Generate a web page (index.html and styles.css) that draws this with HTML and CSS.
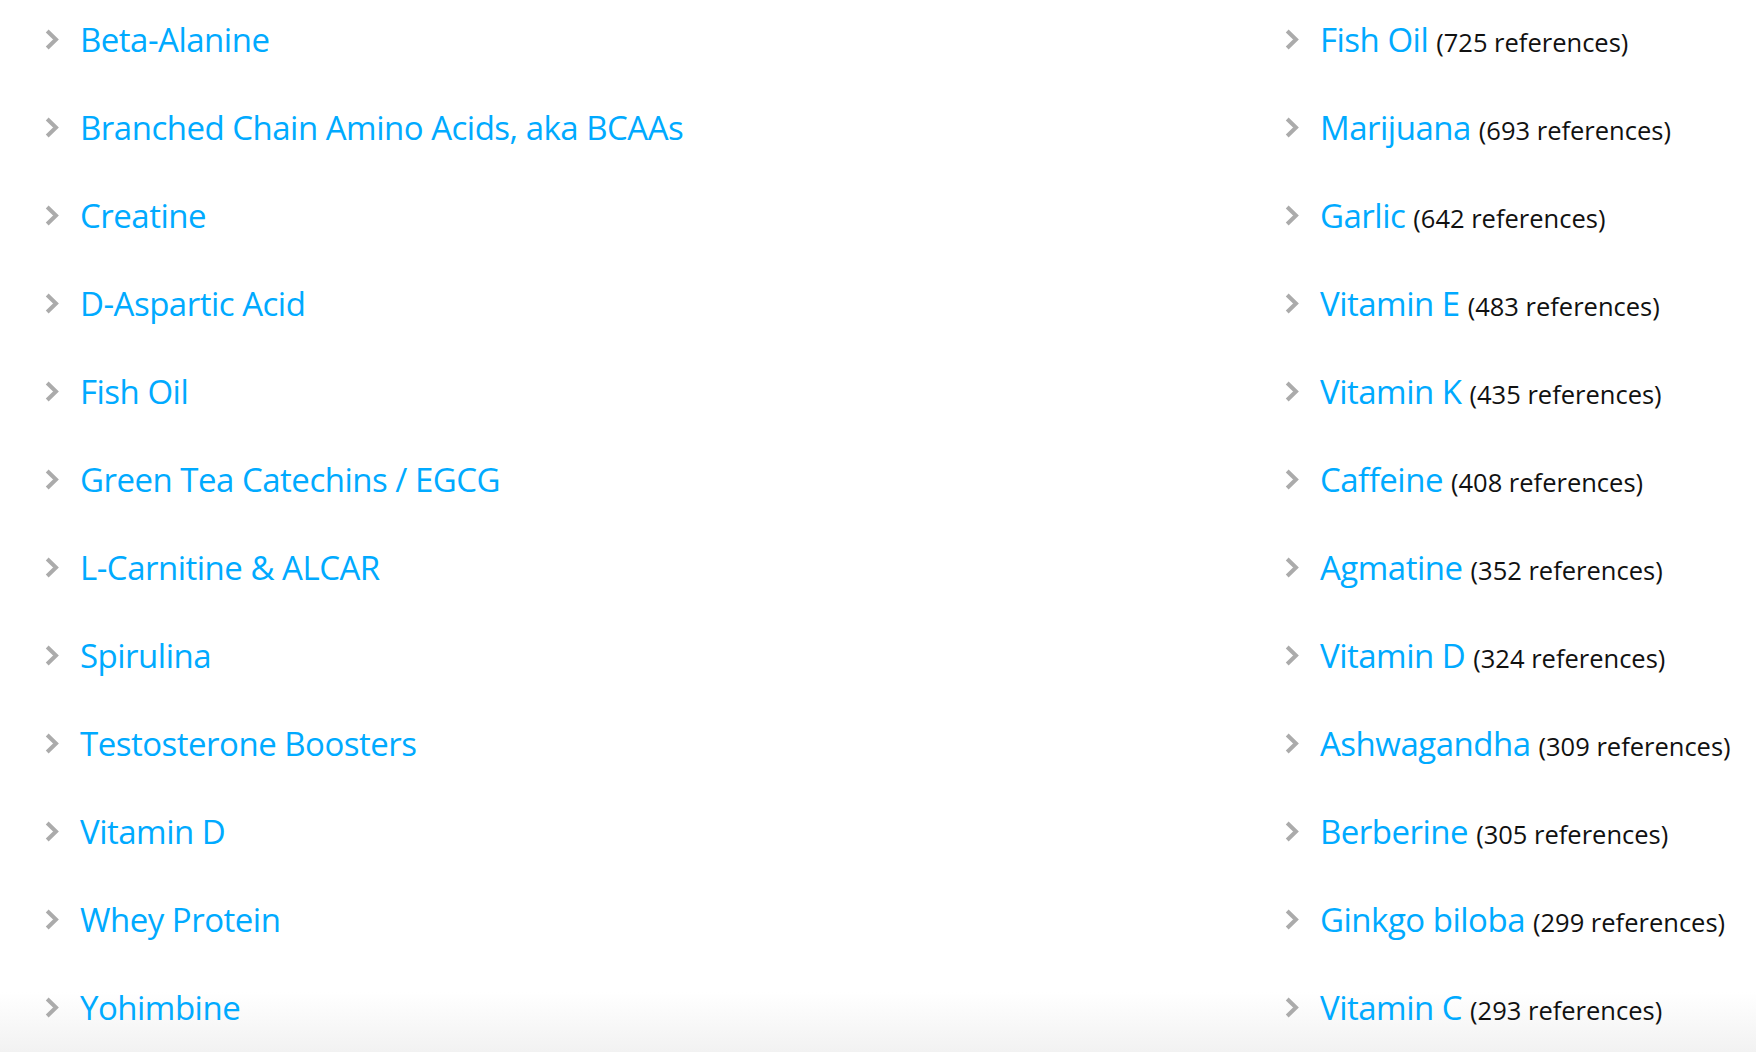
FILE: index.html
```html
<!DOCTYPE html>
<html lang="en">
<head>
<meta charset="utf-8">
<title>Supplements</title>
<link rel="stylesheet" href="styles.css">
</head>
<body>
<div class="lists">
  <ul class="list">
    <li class="item"><svg class="chev" viewBox="0 0 14 21"><polyline points="2.2,2 11,10.5 2.2,19"/></svg><a class="name" href="#">Beta-Alanine</a></li>
    <li class="item"><svg class="chev" viewBox="0 0 14 21"><polyline points="2.2,2 11,10.5 2.2,19"/></svg><a class="name" href="#">Branched Chain Amino Acids, aka BCAAs</a></li>
    <li class="item"><svg class="chev" viewBox="0 0 14 21"><polyline points="2.2,2 11,10.5 2.2,19"/></svg><a class="name" href="#">Creatine</a></li>
    <li class="item"><svg class="chev" viewBox="0 0 14 21"><polyline points="2.2,2 11,10.5 2.2,19"/></svg><a class="name" href="#">D-Aspartic Acid</a></li>
    <li class="item"><svg class="chev" viewBox="0 0 14 21"><polyline points="2.2,2 11,10.5 2.2,19"/></svg><a class="name" href="#">Fish Oil</a></li>
    <li class="item"><svg class="chev" viewBox="0 0 14 21"><polyline points="2.2,2 11,10.5 2.2,19"/></svg><a class="name" href="#">Green Tea Catechins / EGCG</a></li>
    <li class="item"><svg class="chev" viewBox="0 0 14 21"><polyline points="2.2,2 11,10.5 2.2,19"/></svg><a class="name" href="#">L-Carnitine &amp; ALCAR</a></li>
    <li class="item"><svg class="chev" viewBox="0 0 14 21"><polyline points="2.2,2 11,10.5 2.2,19"/></svg><a class="name" href="#">Spirulina</a></li>
    <li class="item"><svg class="chev" viewBox="0 0 14 21"><polyline points="2.2,2 11,10.5 2.2,19"/></svg><a class="name" href="#">Testosterone Boosters</a></li>
    <li class="item"><svg class="chev" viewBox="0 0 14 21"><polyline points="2.2,2 11,10.5 2.2,19"/></svg><a class="name" href="#">Vitamin D</a></li>
    <li class="item"><svg class="chev" viewBox="0 0 14 21"><polyline points="2.2,2 11,10.5 2.2,19"/></svg><a class="name" href="#">Whey Protein</a></li>
    <li class="item"><svg class="chev" viewBox="0 0 14 21"><polyline points="2.2,2 11,10.5 2.2,19"/></svg><a class="name" href="#">Yohimbine</a></li>
  </ul>
  <ul class="list">
    <li class="item"><svg class="chev" viewBox="0 0 14 21"><polyline points="2.2,2 11,10.5 2.2,19"/></svg><a class="name" href="#">Fish Oil</a> <span class="refs">(725 references)</span></li>
    <li class="item"><svg class="chev" viewBox="0 0 14 21"><polyline points="2.2,2 11,10.5 2.2,19"/></svg><a class="name" href="#">Marijuana</a> <span class="refs">(693 references)</span></li>
    <li class="item"><svg class="chev" viewBox="0 0 14 21"><polyline points="2.2,2 11,10.5 2.2,19"/></svg><a class="name" href="#">Garlic</a> <span class="refs">(642 references)</span></li>
    <li class="item"><svg class="chev" viewBox="0 0 14 21"><polyline points="2.2,2 11,10.5 2.2,19"/></svg><a class="name" href="#">Vitamin E</a> <span class="refs">(483 references)</span></li>
    <li class="item"><svg class="chev" viewBox="0 0 14 21"><polyline points="2.2,2 11,10.5 2.2,19"/></svg><a class="name" href="#">Vitamin K</a> <span class="refs">(435 references)</span></li>
    <li class="item"><svg class="chev" viewBox="0 0 14 21"><polyline points="2.2,2 11,10.5 2.2,19"/></svg><a class="name" href="#">Caffeine</a> <span class="refs">(408 references)</span></li>
    <li class="item"><svg class="chev" viewBox="0 0 14 21"><polyline points="2.2,2 11,10.5 2.2,19"/></svg><a class="name" href="#">Agmatine</a> <span class="refs">(352 references)</span></li>
    <li class="item"><svg class="chev" viewBox="0 0 14 21"><polyline points="2.2,2 11,10.5 2.2,19"/></svg><a class="name" href="#">Vitamin D</a> <span class="refs">(324 references)</span></li>
    <li class="item"><svg class="chev" viewBox="0 0 14 21"><polyline points="2.2,2 11,10.5 2.2,19"/></svg><a class="name" href="#">Ashwagandha</a> <span class="refs">(309 references)</span></li>
    <li class="item"><svg class="chev" viewBox="0 0 14 21"><polyline points="2.2,2 11,10.5 2.2,19"/></svg><a class="name" href="#">Berberine</a> <span class="refs">(305 references)</span></li>
    <li class="item"><svg class="chev" viewBox="0 0 14 21"><polyline points="2.2,2 11,10.5 2.2,19"/></svg><a class="name" href="#">Ginkgo biloba</a> <span class="refs">(299 references)</span></li>
    <li class="item"><svg class="chev" viewBox="0 0 14 21"><polyline points="2.2,2 11,10.5 2.2,19"/></svg><a class="name" href="#">Vitamin C</a> <span class="refs">(293 references)</span></li>
  </ul>
</div>
</body>
</html>
```
FILE: styles.css
```css
html {
  min-height: 100%;
  background: linear-gradient(to bottom, #ffffff 0, #ffffff calc(100% - 64px), #f1f1f1 100%);
}
body {
  margin: 0;
  min-height: 1052px;
  font-family: "Open Sans", "Noto Sans", sans-serif;
  overflow: hidden;
}
.lists {
  display: grid;
  grid-template-columns: 1240px 1fr;
  padding-left: 45px;
}
.list {
  list-style: none;
  margin: 0;
  padding: 0;
}
.item {
  display: flex;
  align-items: baseline;
  height: 88px;
  box-sizing: border-box;
  padding-top: 18px;
  line-height: 44px;
  white-space: nowrap;
}
.chev {
  width: 14px;
  height: 21px;
  flex: none;
  align-self: flex-start;
  margin-top: 11px;
  margin-right: 21px;
  fill: none;
  stroke: #ababab;
  stroke-width: 4;
  stroke-linecap: butt;
  stroke-linejoin: miter;
}
.name {
  color: #00aaff;
  font-size: 33px;
  text-decoration: none;
  letter-spacing: -0.5px;
}
.refs {
  color: #111;
  font-size: 25.5px;
  margin-left: 8px;
}
```
